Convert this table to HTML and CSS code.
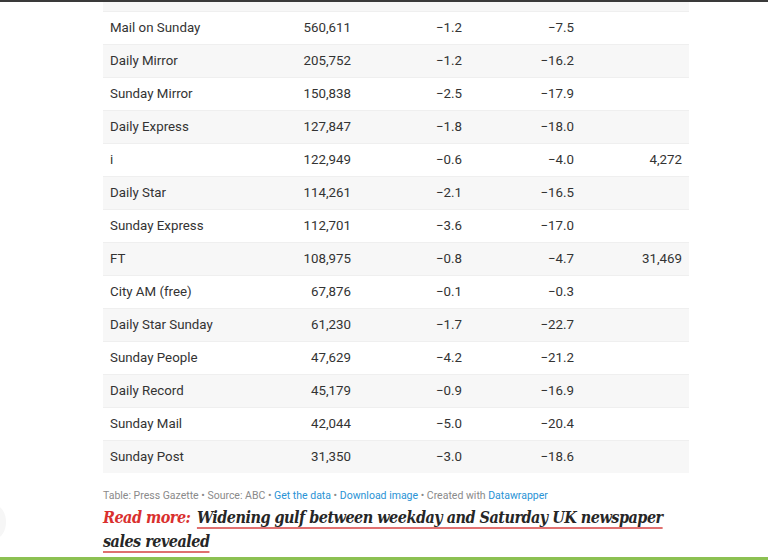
FILE: index.html
```html
<!DOCTYPE html>
<html lang="en">
<head>
<meta charset="utf-8">
<title>Newspaper circulation</title>
<link rel="stylesheet" href="styles.css">
</head>
<body>
<div class="topbar"></div>
<div class="edge-shade"></div>
<main class="content">
  <table class="dw-table">
    <colgroup>
      <col class="c1"><col class="c2"><col class="c3"><col class="c4"><col class="c5">
    </colgroup>
    <tbody>
      <tr class="stripe partial"><td></td><td></td><td></td><td></td><td></td></tr>
      <tr><td>Mail on Sunday</td><td class="num">560,611</td><td class="num">−1.2</td><td class="num">−7.5</td><td class="num"></td></tr>
      <tr class="stripe"><td>Daily Mirror</td><td class="num">205,752</td><td class="num">−1.2</td><td class="num">−16.2</td><td class="num"></td></tr>
      <tr><td>Sunday Mirror</td><td class="num">150,838</td><td class="num">−2.5</td><td class="num">−17.9</td><td class="num"></td></tr>
      <tr class="stripe"><td>Daily Express</td><td class="num">127,847</td><td class="num">−1.8</td><td class="num">−18.0</td><td class="num"></td></tr>
      <tr><td>i</td><td class="num">122,949</td><td class="num">−0.6</td><td class="num">−4.0</td><td class="num">4,272</td></tr>
      <tr class="stripe"><td>Daily Star</td><td class="num">114,261</td><td class="num">−2.1</td><td class="num">−16.5</td><td class="num"></td></tr>
      <tr><td>Sunday Express</td><td class="num">112,701</td><td class="num">−3.6</td><td class="num">−17.0</td><td class="num"></td></tr>
      <tr class="stripe"><td>FT</td><td class="num">108,975</td><td class="num">−0.8</td><td class="num">−4.7</td><td class="num">31,469</td></tr>
      <tr><td>City AM (free)</td><td class="num">67,876</td><td class="num">−0.1</td><td class="num">−0.3</td><td class="num"></td></tr>
      <tr class="stripe"><td>Daily Star Sunday</td><td class="num">61,230</td><td class="num">−1.7</td><td class="num">−22.7</td><td class="num"></td></tr>
      <tr><td>Sunday People</td><td class="num">47,629</td><td class="num">−4.2</td><td class="num">−21.2</td><td class="num"></td></tr>
      <tr class="stripe"><td>Daily Record</td><td class="num">45,179</td><td class="num">−0.9</td><td class="num">−16.9</td><td class="num"></td></tr>
      <tr><td>Sunday Mail</td><td class="num">42,044</td><td class="num">−5.0</td><td class="num">−20.4</td><td class="num"></td></tr>
      <tr class="stripe last"><td>Sunday Post</td><td class="num">31,350</td><td class="num">−3.0</td><td class="num">−18.6</td><td class="num"></td></tr>
    </tbody>
  </table>
  <p class="dw-footer">Table: Press Gazette • Source: ABC • <a href="#">Get the data</a> • <a href="#">Download image</a> • Created with <a href="#">Datawrapper</a></p>
  <p class="read-more"><span class="rm-label">Read more:</span> <a href="#" class="rm-link">Widening gulf between weekday and Saturday UK newspaper sales revealed</a></p>
</main>
<div class="bottombar"></div>
</body>
</html>
```
FILE: styles.css
```css
html, body {
  margin: 0;
  padding: 0;
  background: #ffffff;
}
body {
  width: 768px;
  height: 560px;
  overflow: hidden;
  position: relative;
  font-family: Roboto, "Liberation Sans", sans-serif;
  color: #333333;
}
.topbar {
  height: 2px;
  background: #3a3a3a;
}
.edge-shade {
  position: absolute;
  left: -14px;
  top: 506px;
  width: 20px;
  height: 32px;
  border-radius: 50%;
  background: #f6f6f6;
}
.content {
  margin-left: 103px;
  width: 586px;
  height: 555px;
}
.dw-table {
  width: 586px;
  border-collapse: collapse;
  table-layout: fixed;
  font-size: 13.3px;
  color: #333333;
}
.c1 { width: 150px; }
.c2 { width: 105px; }
.c3 { width: 111px; }
.c4 { width: 112px; }
.c5 { width: 108px; }
.dw-table td {
  height: 33px;
  padding: 0 7px;
  border-bottom: 1px solid #efefef;
  vertical-align: middle;
  white-space: nowrap;
  box-sizing: border-box;
}
.dw-table tr.partial td {
  height: 9px;
}
.dw-table tr.last td {
  border-bottom: none;
}
.dw-table tr.stripe td {
  background: #f7f7f7;
}
.dw-table td.num {
  text-align: right;
}
.dw-footer {
  margin: 16px 0 0;
  font-size: 10.5px;
  line-height: 14px;
  color: #8a8a8a;
}
.dw-footer a {
  color: #2a93d5;
  text-decoration: none;
}
.read-more {
  margin: 3px 0 0;
  font-family: "DejaVu Serif Condensed", "DejaVu Serif", serif;
  font-stretch: condensed;
  font-style: italic;
  font-weight: bold;
  font-size: 16px;
  letter-spacing: -0.5px;
  word-spacing: 0;
  line-height: 24px;
}
.rm-label {
  color: #d9302e;
  margin-right: 2px;
}
.rm-link {
  color: #262626;
  text-decoration: underline;
  text-decoration-color: #e07070;
  text-decoration-thickness: 2px;
  text-underline-offset: 4px;
}
.bottombar {
  position: absolute;
  left: 0;
  right: 0;
  bottom: 0;
  height: 3px;
  background: #8cc152;
}
```
